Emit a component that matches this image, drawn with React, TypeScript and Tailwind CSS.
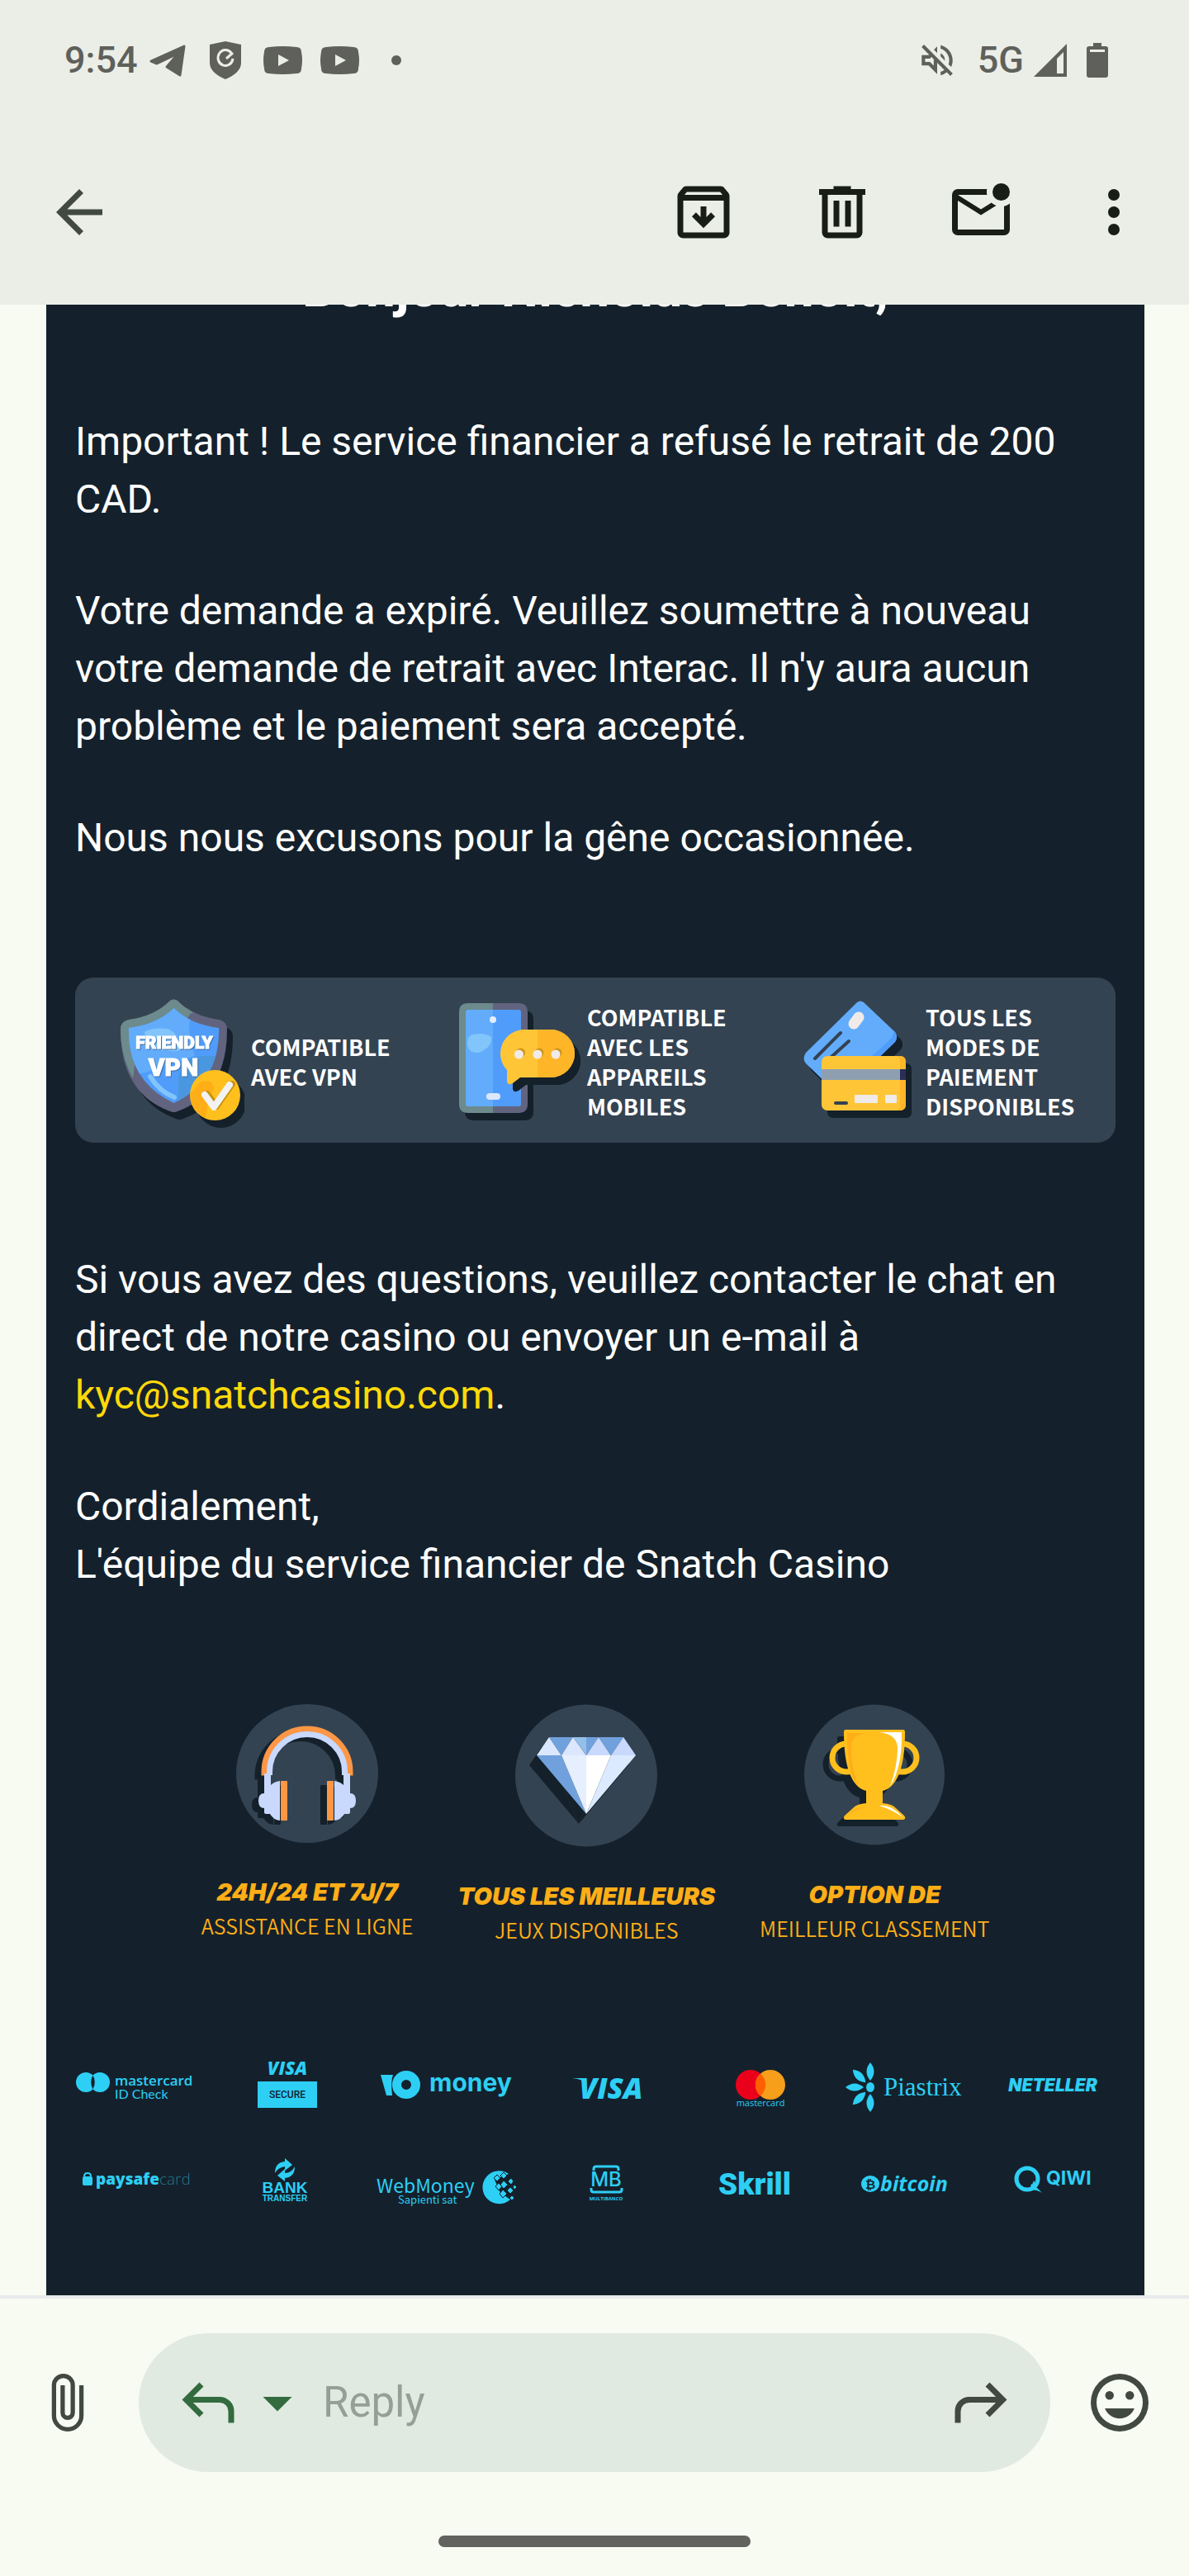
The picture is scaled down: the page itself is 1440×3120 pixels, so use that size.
import type { ReactNode } from "react";

const Icon = ({ d, className = "" }: { d: string; className?: string }) => (
  <svg viewBox="0 0 24 24" className={`size-[84px] shrink-0 ${className}`} fill="currentColor" aria-hidden="true">
    <path d={d} />
  </svg>
);

const ICONS = {
  back: "M7.825 13l5.6 5.6L12 20l-8-8 8-8 1.425 1.4-5.6 5.6H20v2Z",
  archive:
    "M20.54 5.23l-1.39-1.68C18.88 3.21 18.47 3 18 3H6c-.47 0-.88.21-1.16.55L3.46 5.23C3.17 5.57 3 6.02 3 6.5V19c0 1.1.9 2 2 2h14c1.1 0 2-.9 2-2V6.5c0-.48-.17-.93-.46-1.27zM6.24 5h11.52l.83 1H5.42l.82-1zM5 19V8h14v11H5zm7-1.500 4-4-1.400-1.400-1.600 1.600V10h-2v3.700l-1.600-1.600L8 13.500Z",
  trash:
    "M7 21q-.825 0-1.412-.587T5 19V6H4V4h5V3h6v1h5v2h-1v13q0 .825-.587 1.413T17 21ZM17 6H7v13h10ZM9 17h2V8H9Zm4 0h2V8h-2Z",
  unread:
    "M4 20q-.825 0-1.412-.587T2 18V6q0-.825.588-1.412T4 4h10.1q-.1.5-.1 1t.1 1H4l8 5 3.65-2.275q.35.325.763.562t.862.413L12 13 4 8v10h16V9.9q.575-.125 1.075-.35T22 9v9q0 .825-.587 1.413T20 20ZM19 8q-1.25 0-2.125-.875T16 5q0-1.25.875-2.125T19 2q1.25 0 2.125.875T22 5q0 1.25-.875 2.125T19 8Z",
  more: "M12 20a2 2 0 1 1 0-4 2 2 0 0 1 0 4Zm0-6a2 2 0 1 1 0-4 2 2 0 0 1 0 4Zm0-6a2 2 0 1 1 0-4 2 2 0 0 1 0 4Z",
  reply:
    "M19 19v-4q0-1.250-.875-2.125T16 12H6.825l3.600 3.600L9 17l-6-6 6-6 1.425 1.400-3.600 3.600H16q2.075 0 3.538 1.463T21 15v4Z",
  forward:
    "M5 19v-4q0-1.250.875-2.125T8 12h9.175l-3.600 3.600L15 17l6-6-6-6-1.425 1.400 3.600 3.600H8q-2.075 0-3.538 1.463T3 15v4Z",
  caret: "M7 10l5 5 5-5Z",
  emoji:
    "M12 2a10 10 0 1 0 0 20 10 10 0 0 0 0-20Zm0 18a8 8 0 1 1 0-16 8 8 0 0 1 0 16ZM8.500 11a1.500 1.500 0 1 0 0-3 1.500 1.500 0 0 0 0 3Zm7 0a1.500 1.500 0 1 0 0-3 1.500 1.500 0 0 0 0 3ZM12 17.500c2.330 0 4.310-1.460 5.110-3.500H6.890c.8 2.040 2.780 3.500 5.110 3.500Z",
  mute: "M4.340 2.930 2.930 4.340 7.290 8.700 7 9H3v6h4l5 5v-6.590l4.180 4.180c-.65.490-1.380.880-2.180 1.110v2.060a8.940 8.940 0 0 0 3.610-1.750l2.050 2.050 1.410-1.410L4.340 2.930ZM10 15.170 7.830 13H5v-2h2.830l.880-.880L10 11.410v3.760ZM19 12c0 .820-.150 1.610-.410 2.340l1.530 1.530c.560-1.170.880-2.480.880-3.870 0-4.280-2.990-7.860-7-8.770v2.060c2.890.860 5 3.540 5 6.710ZM12 4l-1.880 1.880L12 7.760V4Zm4.500 8A4.500 4.500 0 0 0 14 7.970v1.790l2.480 2.480c.010-.080.020-.160.020-.240Z",
};

const IconButton = ({ label, children, className = "" }: { label: string; children: ReactNode; className?: string }) => (
  <button type="button" aria-label={label} className={`flex shrink-0 items-center justify-center ${className}`}>
    {children}
  </button>
);

const YoutubeIcon = () => (
  <svg width="47" height="34" viewBox="0 0 47 34" fill="currentColor" aria-hidden="true">
    <path fillRule="evenodd" d="M7 1Q23 -1 40 1Q46 1 46 7Q48 17 46 27Q46 33 40 33Q23 35 7 33Q1 33 1 27Q-1 17 1 7Q1 1 7 1ZM18 10v14l13-7Z" />
  </svg>
);

function StatusBar() {
  return (
    <div className="flex h-[146px] items-center justify-between pr-[98px] pl-[78px] text-[#5f605b]">
      <div className="flex items-center">
        <span className="text-[45px] leading-[48px] font-medium">9:54</span>
        <svg width="46" height="40" viewBox="0 0 46 40" className="ml-[14px]" fill="currentColor" stroke="currentColor" strokeWidth="3" strokeLinejoin="round" aria-hidden="true">
          <path d="M42 3 37 38 21 28 33 14Q32 13 30 14L9 24 2 21Z" />
        </svg>
        <svg width="40" height="46" viewBox="0 0 40 46" className="ml-[26px]" aria-hidden="true">
          <path d="M20 0 39 4V26Q39 38 20 46Q1 38 1 26V4Z" fill="currentColor" />
          <path d="M27 14A9 9.500 0 1 0 29 21M29 14 21 21" fill="none" stroke="#ebeee7" strokeWidth="3" />
        </svg>
        <div className="ml-[26px] flex gap-[22px]">
          <YoutubeIcon />
          <YoutubeIcon />
        </div>
        <span className="ml-[39px] size-3 rounded-full bg-current" />
      </div>
      <div className="flex items-center">
        <svg width="50" height="50" viewBox="0 0 24 24" fill="currentColor" aria-label="Muted">
          <path d={ICONS.mute} />
        </svg>
        <span className="ml-[24px] text-[45px] leading-[48px] font-medium">5G</span>
        <svg width="40" height="40" viewBox="0 0 40 40" className="ml-[12px]" fill="currentColor" aria-hidden="true">
          <path fillRule="evenodd" d="M40 0V40H0ZM36 10 28 18V36H36Z" />
        </svg>
        <svg width="26" height="42" viewBox="0 0 26 42" className="ml-[24px]" fill="currentColor" aria-hidden="true">
          <path fillRule="evenodd" d="M8 0H18V4H23Q26 4 26 7V39Q26 42 23 42H3Q0 42 0 39V7Q0 4 3 4H8ZM4 8V11H22V8Z" />
        </svg>
      </div>
    </div>
  );
}

function Toolbar() {
  return (
    <div className="flex h-[223px] items-center justify-between pr-14 pb-[2px] pl-[54px]">
      <IconButton label="Back" className="text-[#424940]">
        <Icon d={ICONS.back} />
      </IconButton>
      <div className="flex items-center gap-[84px] text-[#191d17]">
        <IconButton label="Archive"><Icon d={ICONS.archive} /></IconButton>
        <IconButton label="Delete"><Icon d={ICONS.trash} /></IconButton>
        <IconButton label="Mark as unread"><Icon d={ICONS.unread} /></IconButton>
        <IconButton label="More options" className="w-[70px]"><Icon d={ICONS.more} /></IconButton>
      </div>
    </div>
  );
}

const ShieldArt = () => (
  <svg width="155" height="200" viewBox="50 0 155 200" className="shrink-0" aria-hidden="true">
    <defs>
      <clipPath id="shield">
        <path d="M119.500 37Q140 57 174 61Q176 125 119.500 152Q63 125 65 61Q99 57 119.500 37Z" />
      </clipPath>
    </defs>
    <g className="drop-shadow-[7px_9px_0_#14202a]">
      <path d="M115 28Q119.500 25 124 28Q143 47 174 51Q184 53 184 63Q184 140 124 162Q119.500 164 115 162Q55 140 55 63Q55 53 65 51Q96 47 115 28Z" fill="#62647f" />
      <path d="M115 28Q119.500 25 124 28Q131 36 143 42Q135 46 137 52L73 99L70 122Q55 95 55 63Q55 53 65 51Q96 47 115 28Z" fill="#6d8b8d" />
    </g>
    <g clipPath="url(#shield)">
      <rect x="60" y="30" width="120" height="130" fill="#509cfb" />
      <path d="M60 30H150L138 56Q138 75 145 95L85 115L60 120Z" fill="#62acfb" />
      <path d="M125 160V120Q130 95 155 95H180V160Z" fill="#4a97df" />
      <path d="M84 66Q92 60 112 62Q124 66 128 84Q128 92 110 88Q86 90 84 66Z" fill="#82c5fb" />
      <path d="M91 120Q102 138 120 145" fill="none" stroke="#82c5fb" strokeWidth="6" strokeLinecap="round" />
    </g>
    <g fill="#fff" stroke="#fff" strokeWidth="1" fontFamily="Roboto, sans-serif" fontWeight="900" textAnchor="middle" className="drop-shadow-[1px_1px_0_#3d6ea8]">
      <text x="120" y="86" fontSize="21">FRIENDLY</text>
      <text x="119" y="119" fontSize="30">VPN</text>
    </g>
    <g className="drop-shadow-[7px_9px_0_#14202a]">
      <circle cx="169.500" cy="142.500" r="30.500" fill="#ffc01e" />
      <path d="M150 128Q154 124 164 126Q172 136 164 140L158 170Q139 160 140 140Z" fill="#ffae17" />
    </g>
    <path d="M157 142 168 157 187 130" fill="none" stroke="#f2f2f2" strokeWidth="8" strokeLinecap="round" strokeLinejoin="round" className="drop-shadow-[3px_-1px_0_#c7940f]" />
  </svg>
);

const PhoneArt = () => (
  <svg width="152" height="200" viewBox="460 0 152 200" className="shrink-0" aria-hidden="true">
    <g className="drop-shadow-[7px_9px_0_#14202a]">
      <path d="M506 31V164H476Q465 164 465 153V42Q465 31 476 31Z" fill="#6d8b8d" />
      <path d="M506 31V164H537Q548 164 548 153V42Q548 31 537 31Z" fill="#62647f" />
    </g>
    <path d="M506 39V156H476Q473 156 473 153V42Q473 39 476 39Z" fill="#62acfb" />
    <path d="M506 39V156H537Q540 156 540 153V42Q540 39 537 39Z" fill="#509cfb" />
    <path d="M482 69Q496 66 504 72Q506 84 489 91Q475 92 475 79Q475 70 482 69Z" fill="#82c5fb" />
    <circle cx="506" cy="51" r="4" fill="#e4eefc" />
    <rect x="498" y="140" width="17" height="8" rx="4" fill="#dbe8fc" />
    <g className="drop-shadow-[7px_9px_0_#14202a]">
      <path d="M544 63H576A29 29 0 0 1 576 121H539L530 128Q524 131 523 126V112A29 29 0 0 1 544 63Z" fill="#fec637" />
      <path d="M560 63H576A29 29 0 0 1 576 121H560Z" fill="#ffb528" />
    </g>
    <g fill="#f0ebe8" className="drop-shadow-[2px_-2px_0_#cf9414]">
      <circle cx="537.500" cy="93" r="5.500" />
      <circle cx="560" cy="93" r="5.500" />
      <circle cx="582" cy="93" r="5.500" />
    </g>
  </svg>
);

const CardsArt = () => (
  <svg width="144" height="200" viewBox="878 0 144 200" className="shrink-0" aria-hidden="true">
    <g className="drop-shadow-[7px_9px_0_#14202a]">
      <path d="M947 30Q951 27 955 30L993 66Q997 72 993 78L931 138H920L885 104Q880 98 885 91Z" fill="#62acfb" />
      <path d="M991 64L993 66Q997 72 993 78L931 138L924 133L988 74Q992 69 991 64Z" fill="#509cfb" />
    </g>
    <path d="M943 56L949 48" stroke="#f0ebe8" strokeWidth="13" strokeLinecap="round" />
    <path d="M896 98L927 67M916 96L937 77" stroke="#334251" strokeWidth="4" strokeLinecap="round" />
    <g className="drop-shadow-[7px_9px_0_#14202a]">
      <rect x="904" y="95" width="102" height="66" rx="7" fill="#fec637" />
      <path d="M994 95H999Q1006 95 1006 102V154Q1006 161 999 161H994Q999 161 999 154V102Q999 95 994 95Z" fill="#ffb528" />
    </g>
    <path d="M904 111H999V124H904Z" fill="#8e9fb2" />
    <path d="M999 111H1006V124H999Z" fill="#2a2f55" />
    <path d="M921 152H934" stroke="#334251" strokeWidth="4" strokeLinecap="round" />
    <rect x="944" y="142" width="28" height="10" rx="1" fill="#f0ebe8" />
    <rect x="981" y="142" width="14" height="10" rx="1" fill="#f0ebe8" />
  </svg>
);

const Perk = ({ art, lines }: { art: ReactNode; lines: string[] }) => (
  <div className="flex items-center gap-2">
    {art}
    <p className="pt-1 font-['Noto_Sans_CJK_SC',sans-serif] text-[27px] leading-9 font-bold whitespace-nowrap text-white">
      {lines.map((line) => (
        <span key={line} className="block">{line}</span>
      ))}
    </p>
  </div>
);

const HeadphonesArt = () => (
  <svg width="172" height="168" viewBox="0 0 172 168" aria-hidden="true">
    <ellipse cx="86" cy="84" rx="86" ry="84" fill="#344352" />
    <g className="drop-shadow-[-8px_5px_0_#14202a]">
      <path d="M34 83V82A52 52 0 0 1 138 82V83" fill="none" stroke="#fd9745" strokeWidth="7" strokeLinecap="square" />
      <path d="M40.500 86V82A45.500 45.500 0 0 1 131.500 82V86" fill="none" stroke="#c8d9fd" strokeWidth="7" />
      {["", "matrix(-1 0 0 1 172 0)"].map((flip) => (
        <g key={flip} transform={flip}>
          <path d="M34 84H42V98Q46 94 53 93V141Q45 140 41 133H36Q34 133 34 131V126Q27 126 27 117Q27 108 34 108Z" fill="#c8d9fd" />
          <rect x="54" y="93" width="8" height="48" rx="1" fill="#fd9745" />
        </g>
      ))}
    </g>
  </svg>
);

const DIAMOND_FACETS = [
  ["26,62 41,40 56,62", "#dbe7ff"],
  ["41,40 70,40 56,62", "#71a1dd"],
  ["56,62 70,40 86,62", "#dbe7ff"],
  ["70,40 86,40 86,62", "#93bfe8"],
  ["86,40 101,40 86,62", "#71a1dd"],
  ["86,62 101,40 116,62", "#c8d9fd"],
  ["101,40 131,40 116,62", "#71a1dd"],
  ["116,62 131,40 146,62", "#c8d9fd"],
  ["26,62 56,62 86,133", "#71a1dd"],
  ["56,62 86,62 86,133", "#e5effe"],
  ["86,62 116,62 86,133", "#ffffff"],
  ["116,62 146,62 86,133", "#dbeafe"],
];

const DiamondArt = () => (
  <svg width="172" height="173" viewBox="0 0 172 173" aria-hidden="true">
    <circle cx="86" cy="86.500" r="86" fill="#344352" />
    <g className="drop-shadow-[-9px_12px_0_#14202a]">
      {DIAMOND_FACETS.map(([points, fill]) => (
        <polygon key={points} points={points} fill={fill} />
      ))}
    </g>
  </svg>
);

const TrophyArt = () => (
  <svg width="170" height="171" viewBox="0 0 170 171" aria-hidden="true">
    <circle cx="85" cy="85.500" r="85" fill="#344352" />
    <g className="drop-shadow-[-8px_8px_0_#14202a]">
      <circle cx="51" cy="65" r="17" fill="none" stroke="#ffc01e" strokeWidth="7" />
      <circle cx="119" cy="65" r="17" fill="none" stroke="#ffc01e" strokeWidth="7" />
      <path d="M50 31H120Q122 31 122 34Q122 66 115 84Q108 102 95 105V120Q107 121 111 126L121 135Q124 139 120 140H50Q46 139 49 135L59 126Q63 121 75 120V105Q62 102 55 84Q48 66 48 34Q48 31 50 31Z" fill="#ffc01e" />
      <path d="M52 35H78Q57 36 57 52Q57 80 66 101Q51 82 52 35ZM52 135Q62 124 74 125Q62 128 52 135Z" fill="#ffae17" />
      <path d="M90 34H118Q119 76 104 100Q113 74 113 54Q113 36 90 34ZM91 123Q106 121 119 137Q107 128 91 123Z" fill="#fff" />
    </g>
  </svg>
);

const Feature = ({ art, title, text }: { art: ReactNode; title: string; text: string }) => (
  <div className="flex flex-col items-center whitespace-nowrap text-[#ffae17]">
    {art}
    <h2 className="mt-10 font-['Inter',sans-serif] text-[29px] leading-10 font-black italic">{title}</h2>
    <p className="font-['Noto_Sans_CJK_SC',sans-serif] text-[25px] leading-10 font-[350]">{text}</p>
  </div>
);

const CYAN = "#2dcff5";
const DARK = "#14212c";

const Logo = ({ name, width, children }: { name: string; width: number; children: ReactNode }) => (
  <svg role="img" aria-label={name} width={width} height="64" viewBox={`0 0 ${width} 64`} fill={CYAN} className="overflow-visible font-['Open_Sans',sans-serif]">
    {children}
  </svg>
);

const PETALS = [-90, -45, 0, 45, 90];

function PaymentMethods() {
  return (
    <div className="mt-[139px] grid grid-cols-[142fr_230fr_minmax(0,158fr)_230fr_140fr_212fr_148fr] justify-items-center gap-y-[52px]">
      <Logo name="Mastercard ID Check" width={142}>
        <circle cx="13" cy="26" r="12" />
        <circle cx="30" cy="26" r="12" />
        <path d="M21.500 17.500Q26 26 21.500 34.500Q17 26 21.500 17.500Z" fill={DARK} />
        <text x="48" y="30" fontSize="17" fontWeight="600">mastercard</text>
        <text x="48" y="46" fontSize="16" className="font-['Lato',sans-serif]">ID Check</text>
      </Logo>
      <Logo name="Visa Secure" width={80}>
        <text x="40" y="17" fontSize="22" fontWeight="800" fontStyle="italic" textAnchor="middle">VISA</text>
        <rect x="4" y="25" width="72" height="32" />
        <text x="40" y="45" fontSize="12" fontWeight="500" textAnchor="middle" fill={DARK} className="font-['Roboto',sans-serif]">SECURE</text>
      </Logo>
      <Logo name="YooMoney" width={172}>
        <path d="M5 17H20Q17 24 19 42H12Z" />
        <circle cx="36" cy="29" r="11.500" fill="none" stroke={CYAN} strokeWidth="11" />
        <text x="64" y="37" fontSize="30" fontWeight="700" className="font-['Inter',sans-serif]">money</text>
      </Logo>
      <Logo name="Visa" width={90}>
        <path d="M2 21H16L20 28Q14 22 2 21Z" />
        <text x="49" y="46" fontSize="35" fontWeight="800" fontStyle="italic" textAnchor="middle">VISA</text>
      </Logo>
      <Logo name="Mastercard" width={100}>
        <circle cx="38" cy="29" r="18" fill="#eb001b" />
        <circle cx="62" cy="29" r="18" fill="#f79e1b" />
        <path d="M50 15.500A18 18 0 0 1 50 42.500A18 18 0 0 1 50 15.500Z" fill="#ff5f00" />
        <text x="50" y="55" fontSize="11" fontWeight="500" textAnchor="middle">mastercard</text>
      </Logo>
      <Logo name="Piastrix" width={148}>
        {PETALS.map((angle) => (
          <path key={angle} d="M23 32Q12 23 1 32Q12 41 23 32Z" transform={`rotate(${angle} 31 32)`} />
        ))}
        <ellipse cx="31" cy="32" rx="5" ry="6" />
        <text x="47" y="42" fontSize="31" className="font-['Liberation_Serif',serif]">Piastrix</text>
      </Logo>
      <Logo name="Neteller" width={112}>
        <text x="54" y="37" fontSize="21" fontWeight="900" fontStyle="italic" textAnchor="middle" className="font-['Inter',sans-serif]">NETELLER</text>
      </Logo>

      <Logo name="paysafecard" width={142}>
        <rect x="9" y="24" width="12" height="11" rx="2" />
        <path d="M11 24Q11 20 15 20Q19 20 19 24" fill="none" stroke={CYAN} strokeWidth="2" />
        <text x="25" y="34" fontSize="19" fontWeight="800">
          paysafe<tspan fontWeight="300" opacity="0.5">card</tspan>
        </text>
      </Logo>
      <Logo name="Bank Transfer" width={80}>
        <path d="M25 20Q25 7 37 6V2L46 10L37 17V12Q29 13 25 20ZM49 12Q49 25 37 26V30L28 23L37 15V20Q45 20 49 12Z" />
        <text x="37" y="44" fontSize="19" fontWeight="700" textAnchor="middle" className="font-['Liberation_Sans',sans-serif]">BANK</text>
        <text x="37" y="54" fontSize="10" fontWeight="700" textAnchor="middle" className="font-['Liberation_Sans',sans-serif]">TRANSFER</text>
      </Logo>
      <Logo name="WebMoney" width={172}>
        <text x="0" y="44" fontSize="23" className="font-['Noto_Sans_CJK_SC',sans-serif]">WebMoney</text>
        <text x="26" y="57" fontSize="13" className="font-['Noto_Sans_CJK_SC',sans-serif]">Sapienti sat</text>
        <path d="M160 21A20 20 0 1 0 162 52L150 44L143 28Z" />
        <path d="M146 22l4 4-4 4-4-4ZM154 19l4 4-4 4-4-4ZM154 29l5 5-5 5-4-5ZM163 26l3 4-3 4-4-4ZM153 40l5 5-5 5-4-5ZM162 37l4 4-4 4-4-4ZM148 32l4 4-4 5-4-5ZM167 34l3 3-3 3-2-3ZM164 47l3 3-3 3-3-3Z" stroke={DARK} strokeWidth="1" />
      </Logo>
      <Logo name="Multibanco" width={90}>
        <path d="M28 17V15Q28 12 31 12H55Q58 12 58 15V17M25 38V40Q25 43 28 43H59Q62 43 62 40V38" fill="none" stroke={CYAN} strokeWidth="3" />
        <text x="43" y="36" fontSize="24" fontWeight="500" textAnchor="middle" className="font-['Inter',sans-serif]">MB</text>
        <text x="43" y="53" fontSize="6" fontWeight="700" textAnchor="middle">MULTIBANCO</text>
      </Logo>
      <Logo name="Skrill" width={100}>
        <text x="-1" y="46" fontSize="37" fontWeight="900" className="font-['Roboto',sans-serif]">Skrill</text>
      </Logo>
      <Logo name="Bitcoin" width={148}>
        <ellipse cx="31" cy="33" rx="11" ry="10" />
        <text x="31" y="39" fontSize="15" fontWeight="700" textAnchor="middle" fill={DARK}>₿</text>
        <text x="43" y="42" fontSize="25" fontWeight="700" fontStyle="italic">bitcoin</text>
      </Logo>
      <Logo name="QIWI" width={112}>
        <circle cx="23" cy="27" r="13" fill="none" stroke={CYAN} strokeWidth="5" />
        <path d="M28 33Q34 36 41 44Q34 39 26 41ZM31 29L35 36L29 34Z" />
        <text x="46" y="34" fontSize="23" fontWeight="700" className="font-['Inter',sans-serif]">QIWI</text>
      </Logo>
    </div>
  );
}

function ReplyBar() {
  return (
    <footer className="border-t-4 border-[#e8eaed] pb-[35px]">
      <form className="flex items-center pt-[42px] pr-[42px] pl-10">
        <IconButton label="Attach file" className="text-[#424940]">
          <svg viewBox="0 0 24 24" className="size-[84px]" fill="none" stroke="currentColor" strokeWidth="1.5" aria-hidden="true">
            <path d="M16.750 6v10.500a4.750 4.750 0 0 1-9.500 0V6a3.250 3.250 0 0 1 6.500 0v9.500a1.750 1.750 0 0 1-3.500 0V6" />
          </svg>
        </IconButton>
        <div className="mr-[42px] ml-11 flex h-[168px] min-w-0 flex-1 items-center rounded-full bg-[#e0eae0] px-[42px]">
          <IconButton label="Reply" className="text-[#336b3f]"><Icon d={ICONS.reply} /></IconButton>
          <IconButton label="Reply type" className="text-[#336b3f]"><Icon d={ICONS.caret} /></IconButton>
          <input
            aria-label="Reply message"
            placeholder="Reply"
            className="ml-[13px] min-w-0 flex-1 bg-transparent text-[51px] leading-[70px] outline-none placeholder:text-[#959f93]"
          />
          <IconButton label="Forward" className="text-[#424940]"><Icon d={ICONS.forward} /></IconButton>
        </div>
        <IconButton label="Add emoji" className="text-[#424940]"><Icon d={ICONS.emoji} /></IconButton>
      </form>
      <div className="mx-auto mt-[77px] h-[14px] w-[378px] rounded-full bg-[#62625e]" />
    </footer>
  );
}

export default function App() {
  return (
    <div className="flex min-h-screen flex-col bg-[#f8fbf1] font-['Roboto',sans-serif]">
      <header className="bg-[#ebeee7]">
        <StatusBar />
        <Toolbar />
      </header>

      <main className="flex-1 overflow-hidden pr-[54px] pl-14">
        {/* message is scrolled, so the greeting sits partly under the toolbar */}
        <article className="h-full bg-[#14212c] px-[35px] pb-[104px] text-[48px] leading-[70px] text-white">
          <h1 className="-mt-[54px] text-center text-[64px] font-bold">Bonjour Nicholas Benoit,</h1>

          <div className="mt-[115px] space-y-[65px]">
            <p>Important ! Le service financier a refusé le retrait de 200 CAD.</p>
            <p>
              Votre demande a expiré. Veuillez soumettre à nouveau votre demande de retrait avec Interac. Il n'y aura
              aucun problème et le paiement sera accepté.
            </p>
            <p>Nous nous excusons pour la gêne occasionnée.</p>
          </div>

          <div className="mt-[134px] grid grid-cols-[410fr_418fr_382fr] rounded-[22px] bg-[#344352] pl-[50px]">
            <Perk art={<ShieldArt />} lines={["COMPATIBLE", "AVEC VPN"]} />
            <Perk art={<PhoneArt />} lines={["COMPATIBLE", "AVEC LES", "APPAREILS", "MOBILES"]} />
            <Perk art={<CardsArt />} lines={["TOUS LES", "MODES DE", "PAIEMENT", "DISPONIBLES"]} />
          </div>

          <div className="mt-[131px] space-y-[65px]">
            <p>
              Si vous avez des questions, veuillez contacter le chat en direct de notre casino ou envoyer un e-mail à{" "}
              <a href="mailto:kyc@snatchcasino.com" className="text-[#ffd90a]">kyc@snatchcasino.com</a>.
            </p>
            <p>
              Cordialement,
              <br />
              L'équipe du service financier de Snatch Casino
            </p>
          </div>

          <div className="mt-[134px] flex justify-center gap-[54px]">
            <Feature art={<HeadphonesArt />} title="24H/24 ET 7J/7" text="ASSISTANCE EN LIGNE" />
            <Feature art={<DiamondArt />} title="TOUS LES MEILLEURS" text="JEUX DISPONIBLES" />
            <Feature art={<TrophyArt />} title="OPTION DE" text="MEILLEUR CLASSEMENT" />
          </div>

          <PaymentMethods />
        </article>
      </main>

      <ReplyBar />
    </div>
  );
}
